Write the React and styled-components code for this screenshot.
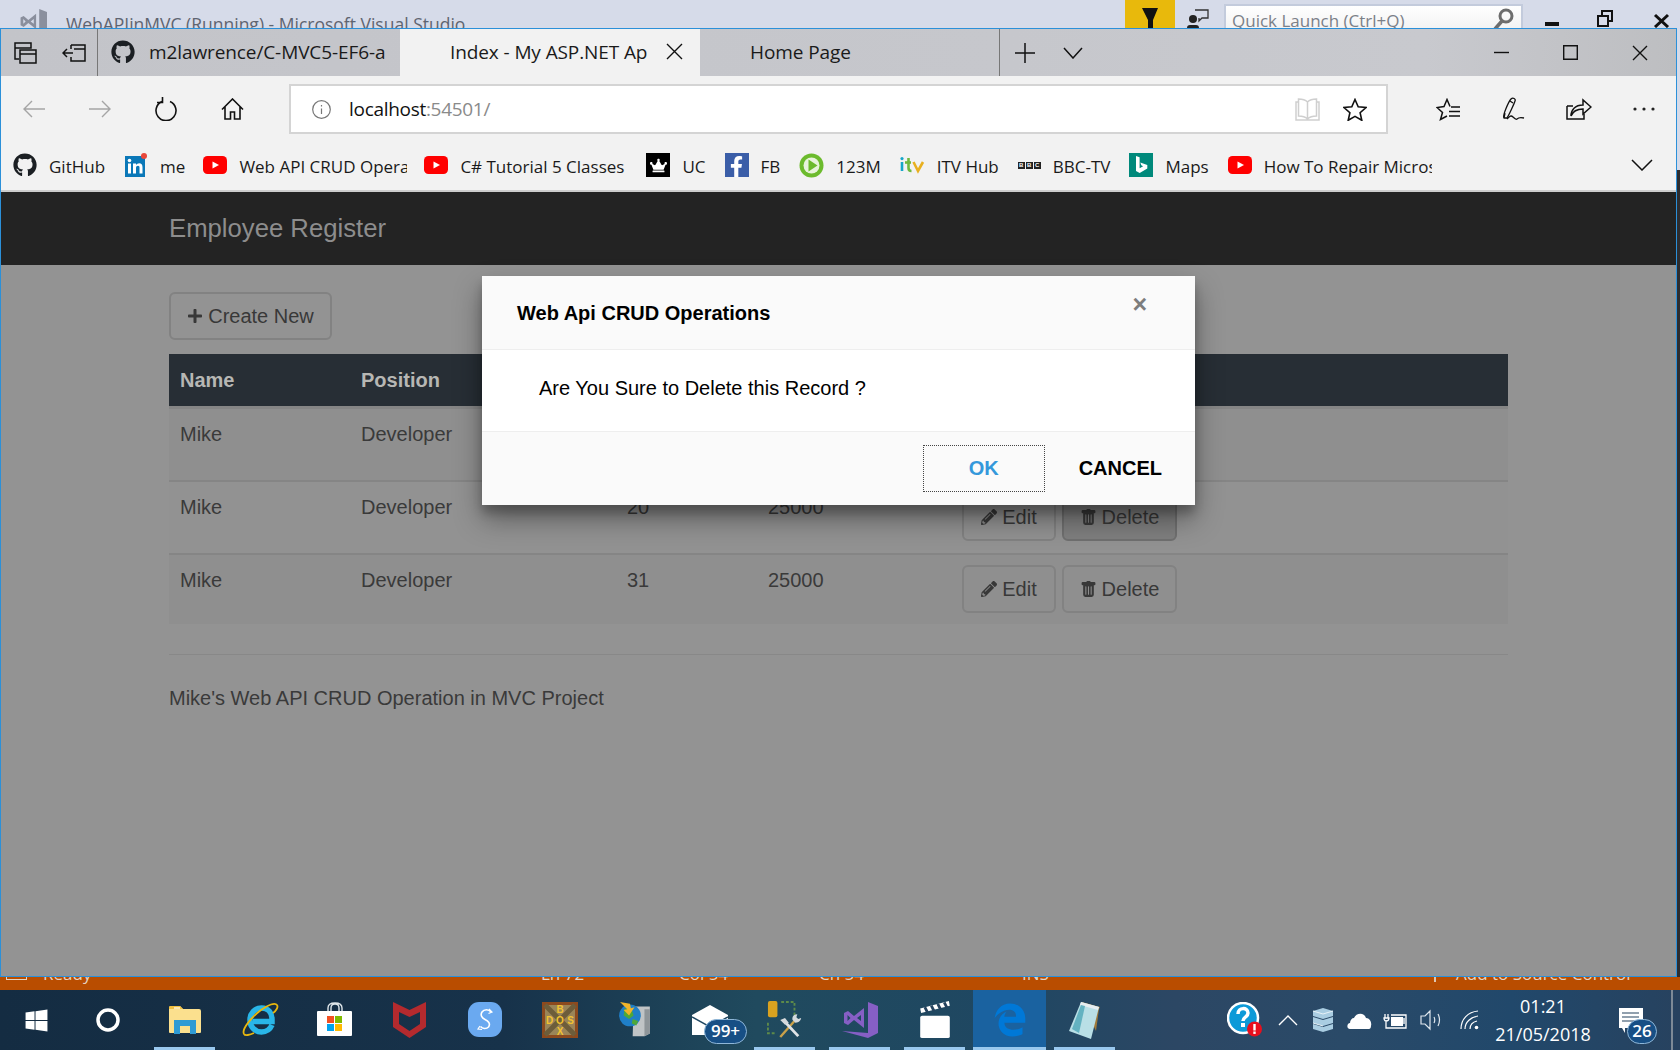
import React from 'react';
import styled, { createGlobalStyle } from 'styled-components';
import { FaGithub, FaWindows, FaCrown, FaFacebookF, FaPlus, FaPencilAlt, FaEdgeLegacy } from 'react-icons/fa';
import { BsTrashFill } from 'react-icons/bs';

const UI_FONT = '"Open Sans", "Noto Sans", sans-serif';
const PAGE_FONT = '"Liberation Sans", Arial, sans-serif';

const GlobalStyle = createGlobalStyle`
  html, body { margin: 0; padding: 0; width: 1680px; height: 1050px; overflow: hidden; }
  * { box-sizing: border-box; }
  svg { display: block; }
`;

const Desktop = styled.div`
  width: 1680px;
  height: 1050px;
  display: flex;
  flex-direction: column;
  overflow: hidden;
  font-family: ${UI_FONT};
`;

/* Visual Studio behind the browser */
const VsTitleBar = styled.div`
  height: 28px;
  background: #d6dbe9;
  display: flex;
  align-items: flex-start;
  overflow: hidden;
  flex-shrink: 0;
`;
const VsLogo = styled.div`
  margin: 9px 0 0 19px;
  width: 30px;
`;
const VsTitle = styled.div`
  margin: 11px 0 0 17px;
  font-size: 17.5px;
  line-height: 26px;
  color: #5f6470;
  white-space: nowrap;
`;
const VsFilter = styled.div`
  margin-left: auto;
  width: 50px;
  height: 28px;
  background: #e8b90c;
  display: flex;
  justify-content: center;
  padding-top: 8px;
`;
const VsFeedback = styled.div`
  width: 49px;
  padding: 9px 0 0 12px;
`;
const QuickLaunch = styled.div`
  width: 299px;
  height: 32px;
  margin-top: 4px;
  border: 2px solid #c3cbdc;
  background: linear-gradient(#fff, #f0f0f0);
  display: flex;
  justify-content: space-between;
  padding: 2px 6px 0 6px;
  font-size: 17px;
  line-height: 26px;
  color: #7b8088;
`;
const VsControls = styled.div`
  width: 157px;
  display: flex;
  padding-left: 22px;
  gap: 38px;
`;

const MiddleRow = styled.div`
  height: 949px;
  display: flex;
  flex-shrink: 0;
  background: linear-gradient(#d6dbe9 0 142px, #2d2d30 142px);
`;

/* Browser */
const Browser = styled.div`
  width: 1677px;
  height: 949px;
  border: 1px solid #2b90d9;
  display: flex;
  flex-direction: column;
  position: relative;
`;
const TabBar = styled.div`
  height: 47px;
  flex-shrink: 0;
  background: linear-gradient(90deg, #c3c4c9, #c6c7cc 60%, #c8c9ce 85%, #bdbec1);
  display: flex;
  align-items: stretch;
  color: #1a1a1a;
`;
const TabActions = styled.div`
  width: 97px;
  border-right: 1px solid #777;
  display: flex;
  align-items: center;
  padding-left: 13px;
  gap: 25px;
`;
const Tab = styled.div`
  width: ${p => p.$width}px;
  display: flex;
  align-items: center;
  padding: 0 0 2px ${p => p.$pad}px;
  background: ${p => (p.$active ? '#f2f2f2' : 'transparent')};
  border-right: 1px solid ${p => p.$line || 'transparent'};
  font-size: 19px;
  white-space: nowrap;
  overflow: hidden;
`;
const TabLabel = styled.span`
  margin-left: ${p => p.$gap || 0}px;
  letter-spacing: -0.1px;
`;
const TabClose = styled.span`
  margin-left: auto;
  margin-right: 16px;
`;
const NewTab = styled.div`
  display: flex;
  align-items: center;
  padding-left: 14px;
  gap: 27px;
`;
const WindowControls = styled.div`
  margin-left: auto;
  display: flex;
  align-items: center;
  gap: 54px;
  padding-right: 28px;
`;

const Toolbar = styled.div`
  height: 64px;
  flex-shrink: 0;
  background: #f2f2f2;
  display: flex;
  align-items: flex-start;
  padding-top: 8px;
`;
const NavSlot = styled.div`
  width: ${p => p.$w || 66}px;
  height: 50px;
  display: flex;
  align-items: center;
  justify-content: center;
  flex-shrink: 0;
`;
const AddressBox = styled.div`
  width: 1099px;
  height: 50px;
  margin: 0 27px 0 24px;
  background: #fff;
  border: 2px solid #d4d4d4;
  display: flex;
  align-items: center;
  padding-left: 21px;
  font-size: 19px;
  color: #111;
`;
const AddressText = styled.span`
  margin-left: 18px;
  letter-spacing: -0.3px;
`;
const AddressPort = styled.span`
  color: #8a8a8a;
`;
const AddressActions = styled.div`
  margin-left: auto;
  display: flex;
  align-items: center;
  gap: 23px;
  padding-right: 19px;
`;

const BookmarkBar = styled.div`
  height: 52px;
  flex-shrink: 0;
  background: #f2f2f2;
  border-bottom: 2px solid #cdcdcd;
  display: flex;
  align-items: center;
  padding: 0 23px 0 12px;
  font-size: 17px;
  color: #1a1a1a;
`;
const Bookmark = styled.div`
  display: flex;
  align-items: center;
  gap: 12px;
  margin-right: ${p => p.$after || 19}px;
  flex-shrink: 0;
`;
const BookmarkLabel = styled.span`
  white-space: nowrap;
  padding-top: 2px;
  ${p => p.$clip && `width: ${p.$clip}px; overflow: hidden;`}
`;
const IconTile = styled.div`
  width: ${p => p.$size || 24}px;
  height: ${p => p.$size || 24}px;
  background: ${p => p.$bg};
  color: #fff;
  display: flex;
  align-items: ${p => (p.$end ? 'flex-end' : 'center')};
  justify-content: center;
  flex-shrink: 0;
`;
const BbcBoxes = styled.div`
  display: flex;
  gap: 1px;
  width: 23px;
`;
const BbcBox = styled.span`
  flex: 1;
  height: 7px;
  background: #222;
  color: #fff;
  font: bold 6px/7px ${PAGE_FONT};
  text-align: center;
`;
const BookmarkMore = styled.div`
  margin-left: auto;
`;

/* Page inside the browser */
const Page = styled.div`
  flex: 1;
  background: #939393;
  display: flex;
  flex-direction: column;
  position: relative;
  font-family: ${PAGE_FONT};
  font-size: 20px;
  line-height: 28px;
  color: #3a3a3a;
`;
const NavBar = styled.div`
  height: 73px;
  flex-shrink: 0;
  background: #232323;
  display: flex;
  align-items: center;
  padding-bottom: 2px;
`;
const Container = styled.div`
  width: 1339px;
  margin: 0 auto;
`;
const Brand = styled.div`
  font-size: 25.7px;
  color: #8d8d8d;
`;
const Content = styled(Container)`
  padding-top: 27px;
`;
const Button = styled.div`
  display: inline-flex;
  align-items: center;
  justify-content: center;
  gap: ${p => p.$gap || 5}px;
  width: ${p => p.$width}px;
  height: 48px;
  border: 2px solid ${p => p.$line || '#828282'};
  border-radius: 6px;
  color: #383838;
  background: ${p => p.$bg || 'transparent'};
`;
const Grid = styled.div`
  display: grid;
  grid-template-columns: 181px 266px 141px 194px 1fr;
`;
const TableHead = styled(Grid)`
  margin-top: 14px;
  height: 55px;
  padding-bottom: 1px;
  border-bottom: 3px solid #858585;
  background: #272e35;
  color: #b7b7b4;
  font-weight: bold;
  align-items: center;
`;
const HeadCell = styled.div`
  padding: 0 11px;
`;
const Row = styled(Grid)`
  height: ${p => p.$height}px;
  background: ${p => (p.$striped ? '#8f8f8f' : '#929292')};
  border-top: ${p => (p.$first ? 'none' : '2px solid #858585')};
`;
const Cell = styled.div`
  padding: 11px 11px 0;
`;
const ActionCell = styled.div`
  padding: ${p => p.$top}px 11px 0;
  display: flex;
  gap: 6px;
`;
const FooterRule = styled.div`
  height: 1px;
  background: #888;
  margin-top: 30px;
`;
const FooterText = styled.p`
  margin: 29px 0 0;
`;

/* Confirm dialog */
const Modal = styled.div`
  position: absolute;
  left: 481px;
  top: 84px;
  width: 713px;
  height: 229px;
  background: #fff;
  border-radius: 2px;
  box-shadow: 0 14px 28px rgba(0, 0, 0, 0.38), 0 8px 10px rgba(0, 0, 0, 0.2);
  display: flex;
  flex-direction: column;
  color: #000;
`;
const ModalHeader = styled.div`
  height: 74px;
  background: #fafafa;
  border-bottom: 1px solid #eee;
  display: flex;
  justify-content: space-between;
  padding: 23px 48px 0 35px;
  font-weight: bold;
`;
const ModalClose = styled.div`
  color: #7d7d7d;
  font-size: 25px;
  line-height: 20px;
  margin-top: -5px;
`;
const ModalBody = styled.div`
  height: 81px;
  padding: 24px 0 0 57px;
`;
const ModalFooter = styled.div`
  flex: 1;
  background: #fafafa;
  border-top: 1px solid #eee;
  display: flex;
  justify-content: flex-end;
  align-items: flex-start;
  padding: 13px 33px 0 0;
  font-weight: bold;
`;
const FlatButton = styled.div`
  height: 47px;
  line-height: ${p => (p.$primary ? 45 : 47)}px;
  text-align: center;
  color: ${p => (p.$primary ? '#3498db' : '#000')};
  ${p => p.$primary && 'width: 122px; border: 1px dotted #444; margin-right: 34px;'}
`;

/* Status bar of Visual Studio, mostly hidden behind the browser */
const StatusBar = styled.div`
  height: 13px;
  flex-shrink: 0;
  background: #b94d00;
  position: relative;
  overflow: hidden;
  color: #e6d3c3;
  font-size: 17px;
  line-height: 24px;
`;
const StatusItem = styled.span`
  position: absolute;
  left: ${p => p.$x}px;
  bottom: 4px;
  white-space: nowrap;
`;
const StatusBox = styled.span`
  position: absolute;
  left: 6px;
  bottom: 10px;
  width: 21px;
  height: 14px;
  border: 1.5px solid #e6d3c3;
`;
const StatusDivider = styled.span`
  position: absolute;
  left: 1434px;
  top: 0;
  width: 2px;
  height: 5px;
  background: #dfc6b0;
`;

/* Windows taskbar */
const Taskbar = styled.div`
  height: 60px;
  flex-shrink: 0;
  background: linear-gradient(90deg, #142c42 0%, #17324a 30%, #204a5e 45%, #1f4762 60%, #2c4764 70%, #2a4a68 80%, #21486b 90%, #27425f 100%);
  display: flex;
  align-items: stretch;
  color: #fff;
`;
const StartSlot = styled.div`
  width: 72px;
  display: flex;
  align-items: center;
  justify-content: center;
`;
const Apps = styled.div`
  display: flex;
  padding-left: 3px;
`;
const AppSlot = styled.div`
  width: 75px;
  position: relative;
  display: flex;
  align-items: center;
  justify-content: center;
  padding-bottom: 1px;
  background: ${p => (p.$active ? '#1a62a0' : 'transparent')};
  ${p => p.$active && 'margin: 0 1px; width: 73px;'}
  &::after {
    content: '';
    display: ${p => (p.$open ? 'block' : 'none')};
    position: absolute;
    bottom: 0;
    left: ${p => (p.$active ? 0 : '7px')};
    right: ${p => (p.$active ? 0 : '7px')};
    height: 3px;
    background: #99c8ee;
  }
`;
const Badge = styled.span`
  position: absolute;
  left: ${p => p.$left}px;
  top: ${p => p.$top}px;
  min-width: ${p => p.$w}px;
  height: 25px;
  border-radius: 13px;
  background: #174f85;
  border: 1px solid #8fb7d8;
  color: #fff;
  font-size: 17px;
  font-weight: 600;
  line-height: 22px;
  text-align: center;
`;
const Tray = styled.div`
  margin-left: auto;
  display: flex;
  align-items: center;
  position: relative;
  padding-right: 7px;
`;
const TraySlot = styled.div`
  width: ${p => p.$w}px;
  display: flex;
  justify-content: center;
`;
const Clock = styled.div`
  width: 96px;
  text-align: center;
  font-size: 18px;
  line-height: 28px;
  margin: 0 20px 0 6px;
  white-space: nowrap;
`;
const NotifySlot = styled.div`
  width: 62px;
  height: 60px;
  position: relative;
  padding: 18px 0 0 8px;
  border-right: 2px solid #7d8a97;
`;

/* drawings */
const Line = ({ w = 24, h = 24, color = '#111', sw = 1.4, children }) => (
  <svg width={w} height={h} viewBox={`0 0 ${w} ${h}`} fill="none" stroke={color} strokeWidth={sw}>
    {children}
  </svg>
);

const YouTube = () => (
  <svg width="24" height="20" viewBox="0 0 24 20">
    <rect y="1" width="24" height="18" rx="4.5" fill="#f00" />
    <path d="M9.5 6.5 16 10l-6.5 3.5z" fill="#fff" />
  </svg>
);

const LinkedIn = () => (
  <svg width="24" height="25" viewBox="0 0 24 25">
    <rect x="1" y="3" width="20" height="21" fill="#0b78b8" />
    <rect x="4" y="10.5" width="3" height="10" fill="#fff" />
    <circle cx="5.5" cy="7.5" r="1.8" fill="#fff" />
    <path d="M9 10.5h3v1.6c.8-1.2 1.9-1.9 3.2-1.9 2.2 0 3.3 1.5 3.3 4v6.3h-3v-5.8c0-1.2-.5-1.9-1.5-1.9-1.2 0-2 .8-2 2.1v5.6H9z" fill="#fff" />
    <circle cx="20" cy="3" r="3" fill="#e8483a" />
  </svg>
);

const PlayTile = () => (
  <svg width="25" height="25" viewBox="0 0 25 25">
    <circle cx="12.5" cy="12.5" r="12" fill="#6cbb2d" />
    <circle cx="12.5" cy="12.5" r="8" fill="#e8f4dc" />
    <path d="M9.5 6.5 18.5 12.5 9.5 18.5z" fill="#6cbb2d" />
  </svg>
);

const ItvLogo = () => (
  <svg width="26" height="18" viewBox="0 0 26 18" fill="none" strokeWidth="2.6">
    <path d="M3 6v9" stroke="#16a7c9" />
    <circle cx="3" cy="2.6" r="1.6" fill="#16a7c9" />
    <path d="M9.5 2v10c0 2 1 3 3 3" stroke="#6fb83f" />
    <path d="M6 6.5h6" stroke="#6fb83f" />
    <path d="M14.5 6l4.5 9 5-9" stroke="#e8b020" />
  </svg>
);

const BingTile = () => (
  <IconTile $bg="#00897b">
    <svg width="14" height="20" viewBox="0 0 14 20">
      <path d="M2 1l3.6 1.3v10.9l3.5-2-1.8-.9-1-2.7 7 2.5v3.5L5.7 18 2 16z" fill="#fff" />
    </svg>
  </IconTile>
);

const VsMark = ({ color, size = 36 }) => (
  <svg width={size} height={size} viewBox="0 0 36 36">
    <path fill={color} d="M26 0l10 4v27l-10 5L0 29l26 2z" />
    <path fill={color} fillRule="evenodd" d="M2 11l4-2 6 5 10-8v20l-10-8-6 5-4-2zM5.500 13v6l3-3zM15 16l4 3v-6z" />
  </svg>
);

const FolderIcon = () => (
  <svg width="34" height="30" viewBox="0 0 34 30">
    <path d="M1 3q0-2 2-2h9l3 3h16q2 0 2 2v21q0 1-1 1H2q-1 0-1-1z" fill="#fbe08e" />
    <path d="M1 2q0-1 2-1h9l3 3H1z" fill="#f0c040" />
    <path d="M6 3h6" stroke="#fff" strokeWidth="1.2" />
    <path d="M6 29V15h22v14h-6v-8H12v8z" fill="#2f9bd5" />
  </svg>
);

const IeIcon = () => (
  <svg width="38" height="36" viewBox="0 0 38 36" fill="none">
    <path d="M31 23c-2 4.500-6 7-10.500 7C13.500 30 9 24.500 9 18S13.500 6 20.500 6 31 11 31 17.500v2H12" stroke="#29b6e8" strokeWidth="5.500" />
    <path d="M3 32C0 27 12 14 20 8c7-5 14-8 16-5 1.500 2-1 6-4 8" stroke="#e8b70e" strokeWidth="1.800" />
    <path d="M3 32c1 2 6 1 10-1" stroke="#e8b70e" strokeWidth="1.800" />
  </svg>
);

const StoreIcon = () => (
  <svg width="36" height="35" viewBox="0 0 36 35">
    <path d="M11 11V6q0-5 7-5t7 5v5M14 11V6q0-4 4-4t4 4v5" fill="none" stroke="#dfe6ea" strokeWidth="1.400" />
    <rect y="9" width="35" height="25" rx="1" fill="#fff" />
    <rect x="10" y="14" width="7" height="7" fill="#f25022" />
    <rect x="18" y="14" width="7" height="7" fill="#7fba00" />
    <rect x="10" y="22" width="7" height="7" fill="#00a4ef" />
    <rect x="18" y="22" width="7" height="7" fill="#ffb900" />
  </svg>
);

const McAfeeIcon = () => (
  <svg width="33" height="36" viewBox="0 0 33 36">
    <path fillRule="evenodd" fill="#b42a2e" d="M0 0l16.500 8L33 0v25L16.500 36 0 25zM6 10v12l10.500 7L27 22V10l-10.500 5z" />
  </svg>
);

const SimpleNote = () => (
  <svg width="34" height="35" viewBox="0 0 34 35" fill="none">
    <rect width="34" height="35" rx="11" fill="#6aa9f0" />
    <path d="M23 10c-2-3-7-3-9 0-2 3 0 6 3 7.500s6 4 3.500 7.500c-2 2-6 2-8-.5" stroke="#fff" strokeWidth="1.600" />
    <path d="M21 7l3 3-3.500 1.500M12 24l-2 3 4 .5" stroke="#fff" strokeWidth="1.200" />
  </svg>
);

const DosLetter = styled.text`
  font: bold 10px ${PAGE_FONT};
  fill: #f2c230;
  text-anchor: middle;
`;
const DosBox = () => (
  <svg width="36" height="36" viewBox="0 0 36 36">
    <rect width="36" height="36" fill="#8c4a1e" />
    <rect x="3" y="3" width="30" height="30" fill="#9a8558" />
    <path d="M3 3l30 30M33 3L3 33" stroke="#6d5d3a" strokeWidth="5" />
    <DosLetter x="18" y="11">B</DosLetter>
    <DosLetter x="7.500" y="22">D</DosLetter>
    <DosLetter x="18" y="22">O</DosLetter>
    <DosLetter x="28.500" y="22">S</DosLetter>
    <DosLetter x="18" y="33">X</DosLetter>
  </svg>
);

const NetworkIcon = () => (
  <svg width="31" height="38" viewBox="0 0 34 42">
    <path d="M16 6h18v30l-6 3H15z" fill="#c0c4c6" />
    <path d="M28 9h6v27l-6 3z" fill="#8e9599" />
    <circle cx="12" cy="16" r="12" fill="#1f7fc8" />
    <path d="M6 8l8 2 2 6-5 4-6-4zM15 20l6 2-2 5-5-2z" fill="#4da83a" />
    <path d="M1 1l11 2 1 5 4-1-6 9-6-6 4-1z" fill="#f0b429" />
  </svg>
);

const MailIcon = () => (
  <svg width="36" height="30" viewBox="0 0 36 30">
    <path d="M0 10L18 0l18 10v20H0z" fill="#fff" />
    <path d="M0 12l18 10 18-10" fill="none" stroke="#1f4762" strokeWidth="1.500" />
  </svg>
);

const ToolsIcon = () => (
  <svg width="36" height="40" viewBox="0 0 38 42" fill="none">
    <rect x="1" y="1" width="10" height="17" rx="2" fill="#d9a21f" />
    <path d="M15 2h14v14M1 24v11h9" stroke="#5d8a4a" strokeWidth="2" strokeDasharray="3 2" />
    <path d="M14 39l15-17" stroke="#c9a14a" strokeWidth="2.500" />
    <path d="M18 22l15 16" stroke="#dfe3e6" strokeWidth="3" />
    <path d="M14 21l5-2 4 5-4 2zM30 24c4 0 6-3 6-5l-3 1-2-2 1-3c-4 0-6 3-5 6z" fill="#d5d9dc" />
  </svg>
);

const ClapperIcon = () => (
  <svg width="30" height="37" viewBox="0 0 32 40">
    <path d="M0 8l31-8 1 5-31 8z" fill="#fff" />
    <path d="M5 6.500l3 6M12 5l3 6M19 3l3 6M26 1.500l3 6" stroke="#24425e" strokeWidth="3" />
    <rect y="16" width="32" height="24" rx="2" fill="#fff" />
  </svg>
);

const NotepadIcon = () => (
  <svg width="34" height="38" viewBox="0 0 34 38">
    <path d="M14 1l18 5-1 2-3 22z" fill="#a07a3a" />
    <path d="M13 1l18 5-8 32L1 30z" fill="#b9dfe6" />
    <path d="M13 1l18 5-1 3-18-5z" fill="#e7edf0" />
    <path d="M4 28l9-24 4 1-6 27z" fill="#3f9eb0" opacity=".7" />
  </svg>
);

const HelpIcon = () => (
  <svg width="36" height="36" viewBox="0 0 36 36">
    <circle cx="16" cy="16" r="15" fill="#0d9ad8" stroke="#fff" strokeWidth="2.500" />
    <path d="M11 12c0-7 10-7 10-1 0 4-5 4-5 8" fill="none" stroke="#fff" strokeWidth="3.500" />
    <rect x="14" y="21" width="4" height="4" fill="#fff" />
    <circle cx="27.500" cy="27" r="7.500" fill="#e8101e" />
    <rect x="26.300" y="22" width="2.400" height="6.500" fill="#fff" />
    <rect x="26.300" y="29.500" width="2.400" height="2.400" fill="#fff" />
  </svg>
);

const StackIcon = () => (
  <svg width="22" height="24" viewBox="0 0 22 24">
    <path d="M1 3l10-3 10 3v5l-10 3L1 8zM1 9l10 3 10-3v6l-10 3-10-3zM1 16l10 3 10-3v5l-10 3-10-3z" fill="#a9cde2" />
    <path d="M1 3l10 3 10-3M1 15l10 3" fill="none" stroke="#e7f2f8" />
  </svg>
);

const people = [
  { name: 'Mike', position: 'Developer', age: 20, salary: 25000, height: 71, top: 11 },
  { name: 'Mike', position: 'Developer', age: 20, salary: 25000, height: 73, top: 11 },
  { name: 'Mike', position: 'Developer', age: 31, salary: 25000, height: 71, top: 10 },
];

const App = () => {
  return (
    <Desktop>
      <GlobalStyle />
      <VsTitleBar>
        <VsLogo><VsMark color="#8a8f9d" size={28} /></VsLogo>
        <VsTitle>WebAPIinMVC (Running) - Microsoft Visual Studio</VsTitle>
        <VsFilter>
          <svg width="16" height="24" viewBox="0 0 16 24"><path d="M0 0h16l-5 12v8H6v-8z" fill="#111" /></svg>
        </VsFilter>
        <VsFeedback>
          <svg width="22" height="24" viewBox="0 0 22 24" fill="none">
            <circle cx="6" cy="10" r="4" fill="#222" />
            <path d="M0 24v-5q0-3 3-3h6q3 0 3 3v5z" fill="#222" />
            <path d="M8 1h13v8h-6l-3 3V9" stroke="#333" strokeWidth="1.300" />
          </svg>
        </VsFeedback>
        <QuickLaunch>
          <span>Quick Launch (Ctrl+Q)</span>
          <svg width="22" height="24" viewBox="0 0 22 24" fill="none">
            <circle cx="13" cy="8" r="6" stroke="#6d6d6d" strokeWidth="3" />
            <path d="M9 13l-7 8" stroke="#6d6d6d" strokeWidth="3.500" />
          </svg>
        </QuickLaunch>
        <VsControls>
          <Line w={14} h={28}><path d="M0 24h14" strokeWidth="4" /></Line>
          <Line w={16} h={28}><path d="M1 16h10v10H1zM5 15v-4h10v10h-3" strokeWidth="2" /></Line>
          <Line w={20} h={28}><path d="M4 15l13 12M17 15L4 27" strokeWidth="3" /></Line>
        </VsControls>
      </VsTitleBar>

      <MiddleRow>
        <Browser>
          <TabBar>
            <TabActions>
              <Line w={23} h={24}>
                <path d="M1 2h16v5H1zM1 7v11h4M6 9h16v13H6zM6 13h16" strokeWidth="1.500" />
              </Line>
              <Line w={24} h={20}>
                <path d="M9 2h14v16H9v-4M9 6V2M23 6H12M1 10h10M5 6l-4 4 4 4" strokeWidth="1.500" />
              </Line>
            </TabActions>
            <Tab $width={302} $pad={13}>
              <FaGithub size={24} color="#1b1f23" />
              <TabLabel $gap={14}>m2lawrence/C-MVC5-EF6-a</TabLabel>
            </Tab>
            <Tab $width={300} $pad={50} $active>
              <TabLabel>Index - My ASP.NET Ap</TabLabel>
              <TabClose>
                <Line w={17} h={17}><path d="M1 1l15 15M16 1L1 16" /></Line>
              </TabClose>
            </Tab>
            <Tab $width={300} $pad={50} $line="#777">
              <TabLabel>Home Page</TabLabel>
            </Tab>
            <NewTab>
              <Line w={22} h={22}><path d="M11 1v20M1 11h20" strokeWidth="1.500" /></Line>
              <Line w={20} h={12}><path d="M1 1l9 10 9-10" strokeWidth="1.500" /></Line>
            </NewTab>
            <WindowControls>
              <Line w={15} h={15}><path d="M0 7.500h15" /></Line>
              <Line w={15} h={15}><path d="M.7.7h13.600v13.600H.700z" /></Line>
              <Line w={16} h={16}><path d="M1 1l14 14M15 1L1 15" /></Line>
            </WindowControls>
          </TabBar>

          <Toolbar>
            <NavSlot>
              <Line w={24} h={20} color="#a5a5a5"><path d="M23 10H2M10 2l-8 8 8 8" /></Line>
            </NavSlot>
            <NavSlot>
              <Line w={24} h={20} color="#a5a5a5"><path d="M1 10h21M14 2l8 8-8 8" /></Line>
            </NavSlot>
            <NavSlot>
              <Line w={23} h={24} sw={1.6}>
                <path d="M7 4.500a10 10 0 1 0 8 0" />
                <path d="M7.500 0v5.500H2" />
              </Line>
            </NavSlot>
            <NavSlot>
              <Line w={23} h={22} sw={1.6}>
                <path d="M1 11.500 11.500 1 22 11.500M4 9v12h5.500v-7h4v7H19V9" />
              </Line>
            </NavSlot>
            <AddressBox>
              <Line w={19} h={19} color="#777" sw={1.200}>
                <circle cx="9.500" cy="9.500" r="8.800" />
                <path d="M9.500 8.500v5.500M9.500 5v1.500" />
              </Line>
              <AddressText>localhost<AddressPort>:54501/</AddressPort></AddressText>
              <AddressActions>
                <Line w={25} h={23} color="#cfcfcf" sw={1.500}>
                  <path d="M12.500 4v17M12.500 4c-2-2-6-3-9-3v17c3 0 7 1 9 3 2-2 6-3 9-3V1c-3 0-7 1-9 3zM3.500 4H1v18h23V4h-2.500" />
                </Line>
                <Line w={24} h={23} sw={1.600}>
                  <path d="M12 1.500l3.200 7.200 7.800.8-5.900 5.200 1.700 7.600L12 18.400l-6.800 3.900 1.700-7.600L1 9.500l7.800-.8z" />
                </Line>
              </AddressActions>
            </AddressBox>
            <NavSlot $w={65}>
              <Line w={24} h={23} sw={1.500}>
                <path d="M14 8.500 11 1.500 8 8.500 1 9.500l5.500 5-2 7L11 18" />
                <path d="M15 9h9M13 13.500h11M13 18h11" />
              </Line>
            </NavSlot>
            <NavSlot $w={66}>
              <Line w={24} h={24} sw={1.300}>
                <path d="M3 21c-2-2 5-17 7-19 2-2 5 0 4 2-1 3-6 14-8 17zM9 4l3 2M3 21l1-5" />
                <path d="M6 22c3-3 4-4 6-2s3 3 4 2 3-2 7-1" />
              </Line>
            </NavSlot>
            <NavSlot $w={65}>
              <Line w={26} h={24} sw={1.500}>
                <path d="M1 9v13h17v-5M1 9h6" />
                <path d="M5 19c0-6 4-11 12-11V3l8 7-8 7v-5c-6 0-10 2-12 7z" />
              </Line>
            </NavSlot>
            <NavSlot $w={65}>
              <svg width="22" height="4" viewBox="0 0 22 4" fill="#222">
                <circle cx="2" cy="2" r="1.600" /><circle cx="11" cy="2" r="1.600" /><circle cx="20" cy="2" r="1.600" />
              </svg>
            </NavSlot>
          </Toolbar>

          <BookmarkBar>
            <Bookmark><FaGithub size={24} color="#1b1f23" /><BookmarkLabel>GitHub</BookmarkLabel></Bookmark>
            <Bookmark $after={18}><LinkedIn /><BookmarkLabel>me</BookmarkLabel></Bookmark>
            <Bookmark $after={17}><YouTube /><BookmarkLabel $clip={168}>Web API CRUD Operations</BookmarkLabel></Bookmark>
            <Bookmark $after={22}><YouTube /><BookmarkLabel>C# Tutorial 5 Classes</BookmarkLabel></Bookmark>
            <Bookmark><IconTile $bg="#000"><FaCrown size={17} /></IconTile><BookmarkLabel>UC</BookmarkLabel></Bookmark>
            <Bookmark><IconTile $bg="#3b5ea8" $end><FaFacebookF size={21} /></IconTile><BookmarkLabel>FB</BookmarkLabel></Bookmark>
            <Bookmark $after={18}><PlayTile /><BookmarkLabel>123M</BookmarkLabel></Bookmark>
            <Bookmark><ItvLogo /><BookmarkLabel>ITV Hub</BookmarkLabel></Bookmark>
            <Bookmark>
              <BbcBoxes><BbcBox>B</BbcBox><BbcBox>B</BbcBox><BbcBox>C</BbcBox></BbcBoxes>
              <BookmarkLabel>BBC-TV</BookmarkLabel>
            </Bookmark>
            <Bookmark><BingTile /><BookmarkLabel>Maps</BookmarkLabel></Bookmark>
            <Bookmark><YouTube /><BookmarkLabel $clip={168}>How To Repair Microsoft</BookmarkLabel></Bookmark>
            <BookmarkMore>
              <Line w={22} h={12} sw={1.500}><path d="M1 1l10 10L21 1" /></Line>
            </BookmarkMore>
          </BookmarkBar>

          <Page>
            <NavBar>
              <Container><Brand>Employee Register</Brand></Container>
            </NavBar>
            <Content>
              <Button $width={163} $gap={5}><FaPlus size={16} />Create New</Button>
              <TableHead>
                <HeadCell>Name</HeadCell>
                <HeadCell>Position</HeadCell>
                <HeadCell>Age</HeadCell>
                <HeadCell>Salary</HeadCell>
                <HeadCell />
              </TableHead>
              {people.map((person, i) => (
                <Row key={i} $first={i === 0} $striped={i !== 1} $height={person.height}>
                  <Cell>{person.name}</Cell>
                  <Cell>{person.position}</Cell>
                  <Cell>{person.age}</Cell>
                  <Cell>{person.salary}</Cell>
                  <ActionCell $top={person.top}>
                    <Button $width={94}><FaPencilAlt size={16} />Edit</Button>
                    <Button $width={115} $bg={i === 1 ? '#7f7f7f' : undefined} $line={i === 1 ? '#707070' : undefined}>
                      <BsTrashFill size={17} />Delete
                    </Button>
                  </ActionCell>
                </Row>
              ))}
              <FooterRule />
              <FooterText>Mike's Web API CRUD Operation in MVC Project</FooterText>
            </Content>
            <Modal>
              <ModalHeader>
                <span>Web Api CRUD Operations</span>
                <ModalClose>×</ModalClose>
              </ModalHeader>
              <ModalBody>Are You Sure to Delete this Record ?</ModalBody>
              <ModalFooter>
                <FlatButton $primary>OK</FlatButton>
                <FlatButton>CANCEL</FlatButton>
              </ModalFooter>
            </Modal>
          </Page>
        </Browser>
      </MiddleRow>

      <StatusBar>
        <StatusBox />
        <StatusItem $x={43}>Ready</StatusItem>
        <StatusItem $x={541}>Ln 72</StatusItem>
        <StatusItem $x={679}>Col 54</StatusItem>
        <StatusItem $x={819}>Ch 54</StatusItem>
        <StatusItem $x={1022}>INS</StatusItem>
        <StatusDivider />
        <StatusItem $x={1456}>Add to Source Control</StatusItem>
      </StatusBar>

      <Taskbar>
        <StartSlot><FaWindows size={25} /></StartSlot>
        <StartSlot>
          <svg width="24" height="24" viewBox="0 0 24 24" fill="none"><circle cx="12" cy="12" r="10" stroke="#fff" strokeWidth="3.500" /></svg>
        </StartSlot>
        <Apps>
          <AppSlot $open><FolderIcon /></AppSlot>
          <AppSlot><IeIcon /></AppSlot>
          <AppSlot><StoreIcon /></AppSlot>
          <AppSlot><McAfeeIcon /></AppSlot>
          <AppSlot><SimpleNote /></AppSlot>
          <AppSlot><DosBox /></AppSlot>
          <AppSlot><NetworkIcon /></AppSlot>
          <AppSlot><MailIcon /><Badge $left={32} $top={29} $w={43}>99+</Badge></AppSlot>
          <AppSlot $open><ToolsIcon /></AppSlot>
          <AppSlot $open><VsMark color="#865fc5" size={36} /></AppSlot>
          <AppSlot $open><ClapperIcon /></AppSlot>
          <AppSlot $open $active><FaEdgeLegacy size={34} color="#0078d7" /></AppSlot>
          <AppSlot $open><NotepadIcon /></AppSlot>
        </Apps>
        <Tray>
          <TraySlot $w={52}><HelpIcon /></TraySlot>
          <TraySlot $w={34}>
            <Line w={20} h={11} color="#fff" sw={1.400}><path d="M1 10l9-9 9 9" /></Line>
          </TraySlot>
          <TraySlot $w={36}><StackIcon /></TraySlot>
          <TraySlot $w={36}>
            <svg width="25" height="19" viewBox="0 0 25 19"><path d="M3 18c-4 0-3-6 0-6 0-3 2-5 4-5 2-5 10-6 12 0 4 0 6 5 5 8 0 2-1 3-2 3z" fill="#fff" /></svg>
          </TraySlot>
          <TraySlot $w={36}>
            <Line w={24} h={18} color="#fff" sw={1.300}>
              <path d="M8 4h15v13H3v-7M3 10c-2 0-2-3-2-3h5s0 3-3 3M2 7V3M5 7V3M21 7v6" />
              <rect x="8" y="6" width="12" height="9" fill="#fff" stroke="none" />
            </Line>
          </TraySlot>
          <TraySlot $w={38}>
            <Line w={24} h={22} color="#dfe7ee" sw={1.200}>
              <path d="M1 7h4l5-5v18l-5-5H1zM14 8c1 2 1 4 0 6M18 5c2 4 2 8 0 12" />
            </Line>
          </TraySlot>
          <TraySlot $w={38}>
            <Line w={20} h={20} color="#fff" sw={1.200}>
              <path d="M1 19C1 9 8 2 18 1M5 19c0-7 6-12 13-13M10 19c0-4 3-7 7-8" />
              <circle cx="16.500" cy="17.500" r="1.800" fill="#fff" stroke="none" />
            </Line>
          </TraySlot>
          <Clock>01:21<br />21/05/2018</Clock>
          <NotifySlot>
            <svg width="24" height="27" viewBox="0 0 24 27" fill="none">
              <path d="M0 0h24v20H6v5l-3-5H0z" fill="#fff" />
              <path d="M3 5h17M3 9h17M3 13h12" stroke="#24425e" strokeWidth="1.200" />
            </svg>
            <Badge $left={16} $top={29} $w={30}>26</Badge>
          </NotifySlot>
        </Tray>
      </Taskbar>
    </Desktop>
  );
};

export default App;
